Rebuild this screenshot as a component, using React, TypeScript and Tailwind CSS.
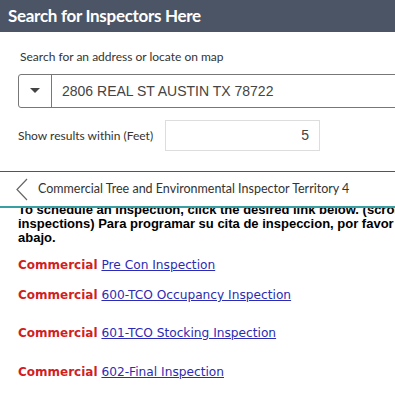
const links = [
  { label: "Pre Con Inspection", mt: "mt-[12px]" },
  { label: "600-TCO Occupancy Inspection", mt: "mt-[14px]" },
  { label: "601-TCO Stocking Inspection", mt: "mt-[22px]" },
  { label: "602-Final Inspection", mt: "mt-[23px]" },
];

export default function App() {
  return (
    <div className="w-[395px] h-[403px] overflow-hidden bg-white font-['Lato',sans-serif]">
      <div className="h-[32px] bg-[#4c5566] flex items-center pl-[8px]">
        <h1 className="text-white text-[17px] font-bold tracking-[-0.3px]">Search for Inspectors Here</h1>
      </div>

      <p className="mt-[17px] ml-[20px] text-[12px] leading-[16px] text-[#333]">
        Search for an address or locate on map
      </p>

      <div className="mt-[9px] ml-[18px] w-[400px] h-[34px] flex border border-[#777] rounded-l-[3px]">
        <div className="w-[33px] flex items-center justify-center border-r border-[#777]">
          <svg width="10" height="6" viewBox="0 0 10 6">
            <path d="M0 0 L10 0 L5 5 Z" fill="#444" />
          </svg>
        </div>
        <div className="flex items-center pl-[10px] text-[14px] text-[#444] font-['Liberation_Sans',Arial,sans-serif]">
          2806 REAL ST AUSTIN TX 78722
        </div>
      </div>

      <div className="mt-[12px] ml-[18px] flex items-center">
        <span className="text-[12px] text-[#333] w-[147px]">Show results within (Feet)</span>
        <div className="w-[155px] h-[31px] border border-[#ddd] flex items-center justify-end pr-[10px] text-[14px] text-[#444] font-['Liberation_Sans',Arial,sans-serif]">
          5
        </div>
      </div>

      <div className="mt-[20px] border-t border-[#555]" />

      <div className="h-[34px] flex items-center pl-[16px]">
        <svg width="12" height="23" viewBox="0 0 12 23" className="shrink-0">
          <path d="M11 1 L1 11.5 L11 22" fill="none" stroke="#666" strokeWidth="1.2" />
        </svg>
        <span className="ml-[10px] text-[12.5px] text-[#333]">
          Commercial Tree and Environmental Inspector Territory 4
        </span>
      </div>

      <div className="border-t-2 border-[#3a9fa0]" />

      <div className="h-[195px] overflow-hidden">
        <div className="-mt-[5px] pl-[18px]">
          <p className="text-[13px] leading-[14px] font-bold text-black whitespace-nowrap font-['Liberation_Sans',Arial,sans-serif]">
            To schedule an inspection, click the desired link below. (scroll down for more
            <br />
            inspections) Para programar su cita de inspeccion, por favor haga clic en el enlace
            <br />
            abajo.
          </p>
          {links.map((l) => (
            <p
              key={l.label}
              className={`${l.mt} text-[12.2px] leading-[16px] font-['DejaVu_Sans',Verdana,sans-serif]`}
            >
              <span className="font-bold text-[#d11f1f] text-[12px]">Commercial</span>{" "}
              <a href="#" className="text-[#2b2bb3] underline">
                {l.label}
              </a>
            </p>
          ))}
        </div>
      </div>
    </div>
  );
}
